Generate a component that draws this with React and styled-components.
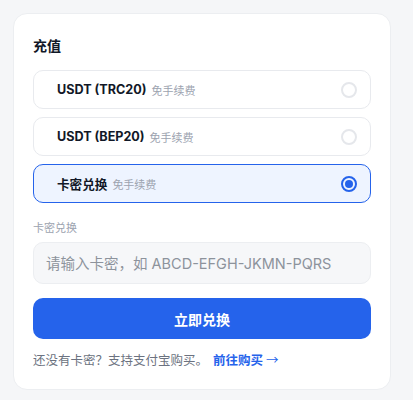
import React, { useState } from "react"
import styled, { createGlobalStyle } from "styled-components"

const GlobalStyle = createGlobalStyle`
  html, body {
    margin: 0;
    padding: 0;
    background: #f5f6f8;
    font-family: Inter, "Noto Sans CJK SC", sans-serif;
  }
`

const Page = styled.div`
  padding: 13px 22px 12px 13px;
`

const Card = styled.div`
  background: #ffffff;
  border: 1px solid #eceef1;
  border-radius: 14px;
  padding: 22px 19px 19px 19px;
  display: flex;
  flex-direction: column;
`

const Title = styled.div`
  font-size: 14px;
  font-weight: 700;
  color: #111827;
  line-height: 20px;
  margin-bottom: 14px;
`

const Options = styled.div`
  display: flex;
  flex-direction: column;
  gap: 8px;
`

const Option = styled.div`
  height: 39px;
  box-sizing: border-box;
  border: 1px solid ${(p) => (p.$active ? "#2563eb" : "#e8eaee")};
  background: ${(p) => (p.$active ? "#eef4ff" : "#ffffff")};
  border-radius: 10px;
  display: flex;
  align-items: center;
  padding: 0 13px 0 23px;
  cursor: pointer;
`

const OptionName = styled.span`
  font-size: 12.6px;
  font-weight: 700;
  color: #111827;
`

const OptionHint = styled.span`
  font-size: 11px;
  color: #9ca3af;
  margin-left: 5px;
  flex: 1;
`

const Radio = styled.span`
  width: 16px;
  height: 16px;
  box-sizing: border-box;
  border-radius: 50%;
  border: 2px solid ${(p) => (p.$active ? "#2563eb" : "#e5e7eb")};
  display: flex;
  align-items: center;
  justify-content: center;

  &::after {
    content: "";
    width: 8px;
    height: 8px;
    border-radius: 50%;
    background: ${(p) => (p.$active ? "#2563eb" : "transparent")};
  }
`

const FieldLabel = styled.div`
  font-size: 11px;
  color: #9ca3af;
  margin-top: 17px;
  line-height: 16px;
`

const Input = styled.input`
  margin-top: 6px;
  height: 42px;
  box-sizing: border-box;
  border: 1px solid #eceef1;
  background: #f6f7f9;
  border-radius: 10px;
  padding: 0 12px;
  font-family: Inter, "Noto Sans CJK SC", sans-serif;
  font-size: 14.5px;
  color: #111827;
  outline: none;

  &::placeholder {
    color: #8d939c;
  }
`

const Button = styled.button`
  margin-top: 14px;
  height: 41px;
  border: none;
  border-radius: 10px;
  background: #2563eb;
  color: #ffffff;
  font-family: Inter, "Noto Sans CJK SC", sans-serif;
  font-size: 14px;
  font-weight: 700;
  cursor: pointer;
`

const Footer = styled.div`
  margin-top: 12px;
  font-size: 12.5px;
  color: #6b7280;
  line-height: 18px;
`

const Link = styled.a`
  color: #2563eb;
  font-weight: 700;
  margin-left: 5px;
  text-decoration: none;
  cursor: pointer;
`

const Arrow = styled.span`
  font-family: "Noto Sans CJK SC", sans-serif;
  font-weight: 400;
  margin-left: 3px;
`

const methods = [
  { id: "trc20", name: "USDT (TRC20)" },
  { id: "bep20", name: "USDT (BEP20)" },
  { id: "card", name: "卡密兑换" },
]

export default function App() {
  const [selected, setSelected] = useState("card")
  return (
    <Page>
      <GlobalStyle />
      <Card>
        <Title>充值</Title>
        <Options>
          {methods.map((m) => (
            <Option key={m.id} $active={selected === m.id} onClick={() => setSelected(m.id)}>
              <OptionName>{m.name}</OptionName>
              <OptionHint>免手续费</OptionHint>
              <Radio $active={selected === m.id} />
            </Option>
          ))}
        </Options>
        <FieldLabel>卡密兑换</FieldLabel>
        <Input placeholder="请输入卡密，如 ABCD-EFGH-JKMN-PQRS" />
        <Button>立即兑换</Button>
        <Footer>
          还没有卡密？支持支付宝购买。
          <Link>
            前往购买<Arrow>→</Arrow>
          </Link>
        </Footer>
      </Card>
    </Page>
  )
}
